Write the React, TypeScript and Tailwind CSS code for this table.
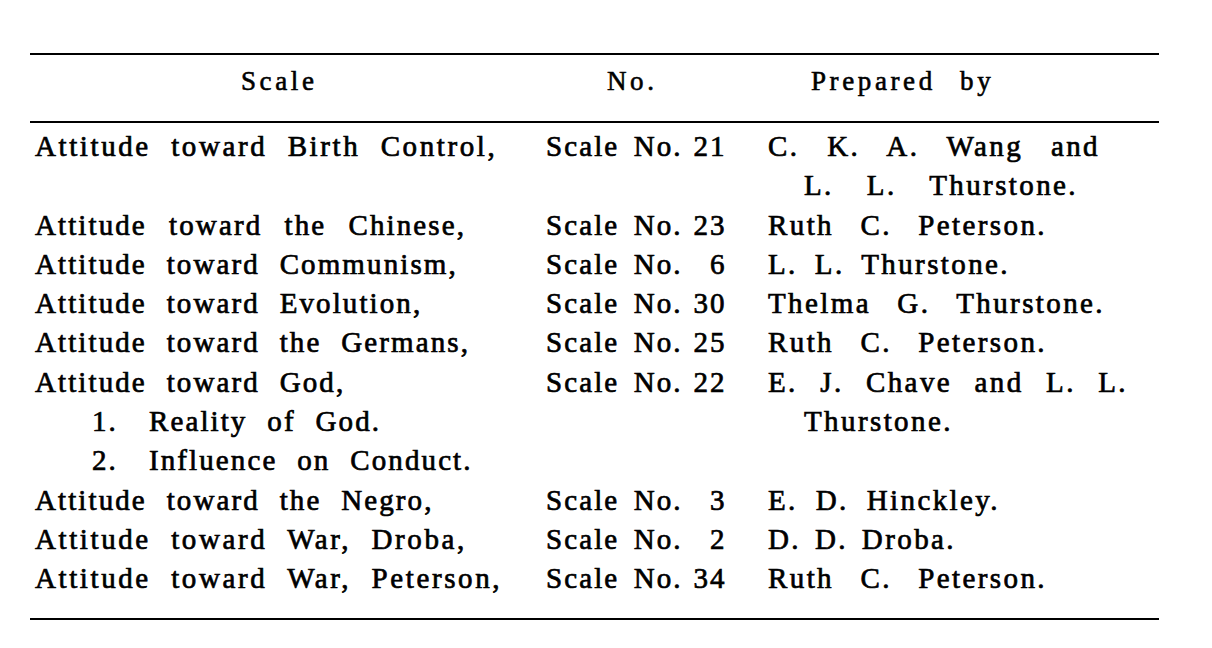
type Line = { text: string; w?: number; wide?: boolean; indent?: boolean; num?: string };

// w = width of the printed line where the scan spreads the words out
const rows: { scale: Line[]; no: string; by: Line[] }[] = [
  {
    scale: [{ text: 'Attitude toward Birth Control,', wide: true }],
    no: '21',
    by: [{ text: 'C. K. A. Wang and', w: 332 }, { text: 'L. L. Thurstone.', indent: true, w: 274 }],
  },
  {
    scale: [{ text: 'Attitude toward the Chinese,', w: 431 }],
    no: '23',
    by: [{ text: 'Ruth C. Peterson.', w: 279 }],
  },
  {
    scale: [{ text: 'Attitude toward Communism,' }],
    no: '6',
    by: [{ text: 'L. L. Thurstone.', w: 242 }],
  },
  {
    scale: [{ text: 'Attitude toward Evolution,' }],
    no: '30',
    by: [{ text: 'Thelma G. Thurstone.', w: 337 }],
  },
  {
    scale: [{ text: 'Attitude toward the Germans,' }],
    no: '25',
    by: [{ text: 'Ruth C. Peterson.', w: 279 }],
  },
  {
    scale: [
      { text: 'Attitude toward God,' },
      { num: '1.', text: 'Reality of God.' },
      { num: '2.', text: 'Influence on Conduct.' },
    ],
    no: '22',
    by: [{ text: 'E. J. Chave and L. L.', w: 360 }, { text: 'Thurstone.', indent: true }],
  },
  {
    scale: [{ text: 'Attitude toward the Negro,' }],
    no: '3',
    by: [{ text: 'E. D. Hinckley.', w: 232 }],
  },
  {
    scale: [{ text: 'Attitude toward War, Droba,', wide: true }],
    no: '2',
    by: [{ text: 'D. D. Droba.', w: 188 }],
  },
  {
    scale: [{ text: 'Attitude toward War, Peterson,', wide: true }],
    no: '34',
    by: [{ text: 'Ruth C. Peterson.', w: 279 }],
  },
];

function Text({ line }: { line: Line }) {
  if (!line.w) return <span className={line.wide ? 'tracking-[2.6px]' : ''}>{line.text}</span>;
  return (
    <span className="inline-block whitespace-nowrap [text-align-last:justify]" style={{ width: line.w }}>
      {line.text}
    </span>
  );
}

function ScaleLine({ line }: { line: Line }) {
  if (line.num) {
    return (
      <div className="flex pl-[57px]">
        <span className="w-[57px]">{line.num}</span>
        <Text line={line} />
      </div>
    );
  }
  return (
    <div>
      <Text line={line} />
    </div>
  );
}

export default function App() {
  return (
    <div className="w-[1212px] h-[648px] bg-white text-black font-['Liberation_Serif'] overflow-hidden">
      <div className="ml-[30px] w-[1129px] pt-[53px]">
        <div className="h-[2px] bg-black" />

        {/* header */}
        <div className="grid grid-cols-[511px_222px_1fr] pl-[5px] pt-[11px] pb-[25px] text-[27px] leading-[30px] tracking-[3.6px] [word-spacing:14px] [-webkit-text-stroke:0.6px_black]">
          <div className="pl-[206px]">Scale</div>
          <div className="pl-[61px]">No.</div>
          <div className="pl-[43px]">Prepared by</div>
        </div>

        <div className="h-[2px] bg-black" />

        {/* body */}
        <div className="pl-[5px] pt-[4px] pb-[19px] text-[29px] leading-[39.3px] tracking-[2.1px] [-webkit-text-stroke:0.7px_black]">
          {rows.map((r, i) => (
            <div key={i} className="grid grid-cols-[511px_222px_1fr]">
              <div className="[word-spacing:10.5px]">
                {r.scale.map((l, j) => (
                  <ScaleLine key={j} line={l} />
                ))}
              </div>
              <div className="flex [word-spacing:5px]">
                <span>Scale No.</span>
                <span className="w-[44px] text-right">{r.no}</span>
              </div>
              <div className="tracking-[2.4px]">
                {r.by.map((b, j) => (
                  <div key={j} className={b.indent ? 'pl-[36px]' : ''}>
                    <Text line={b} />
                  </div>
                ))}
              </div>
            </div>
          ))}
        </div>

        <div className="h-[2px] bg-black" />
      </div>
    </div>
  );
}
